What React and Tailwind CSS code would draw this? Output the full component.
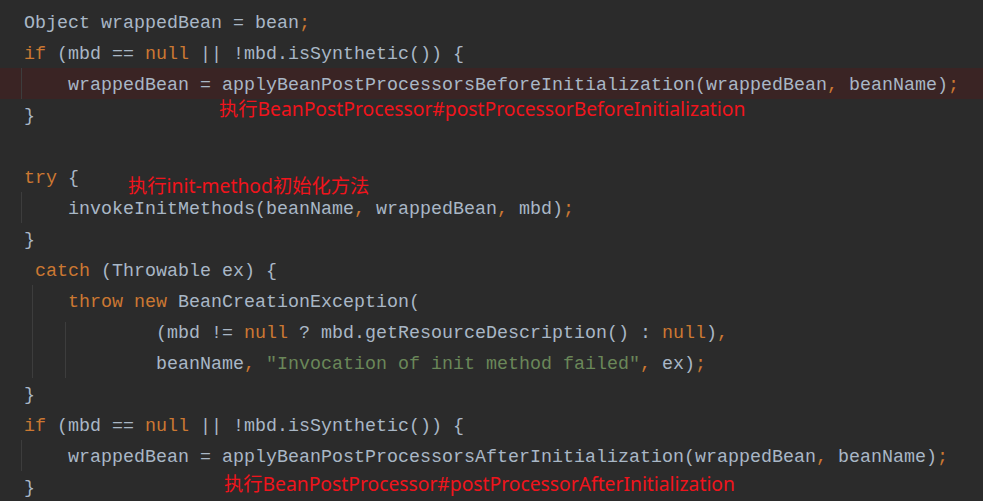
import React from "react";

const K = ({ children }) => <span className="text-[#cc7832]">{children}</span>;
const S = ({ children }) => <span className="text-[#6a8759]">{children}</span>;

const Guide = ({ x, top = 0 }) => (
  <span
    className={`absolute bottom-0 w-px bg-[#3d3d3d] ${x} ${top}`}
  />
);

const Line = ({ children, highlight, guides }) => (
  <div
    className={`relative h-[31px] flex items-center whitespace-pre ${
      highlight ? "bg-[#3a2424]" : ""
    }`}
  >
    {guides}
    <span className="pl-[24px] pt-[5px]">{children}</span>
  </div>
);

const Note = ({ className, children }) => (
  <div
    className={`absolute whitespace-pre text-[19.3px] leading-none text-[#f0141c] ${className}`}
    style={{ fontFamily: '"Noto Sans", "Noto Sans CJK SC", sans-serif' }}
  >
    {children}
  </div>
);

export default function App() {
  return (
    <div
      className="relative w-[983px] h-[501px] overflow-hidden bg-[#2b2b2b] pt-[6px] text-[18.33px] text-[#a9b7c6]"
      style={{ fontFamily: '"Liberation Mono", monospace' }}
    >
      <Line>
        Object wrappedBean = bean<K>;</K>
      </Line>
      <Line>
        <K>if</K> (mbd == <K>null</K> || !mbd.isSynthetic()) {"{"}
      </Line>
      <Line highlight guides={<Guide x="left-[21px]" top="top-0" />}>
        {"    "}wrappedBean = applyBeanPostProcessorsBeforeInitialization(wrappedBean
        <K>,</K> beanName)<K>;</K>
      </Line>
      <Line>{"}"}</Line>
      <Line>{""}</Line>
      <Line>
        <K>try</K> {"{"}
      </Line>
      <Line guides={<Guide x="left-[21px]" top="top-0" />}>
        {"    "}invokeInitMethods(beanName<K>,</K> wrappedBean<K>,</K> mbd)<K>;</K>
      </Line>
      <Line>{"}"}</Line>
      <Line>
        {" "}
        <K>catch</K> (Throwable ex) {"{"}
      </Line>
      <Line guides={<Guide x="left-[32px]" top="top-0" />}>
        {"    "}
        <K>throw new</K> BeanCreationException(
      </Line>
      <Line
        guides={
          <>
            <Guide x="left-[32px]" top="top-0" />
            <Guide x="left-[65px]" top="top-[6px]" />
          </>
        }
      >
        {"            "}(mbd != <K>null</K> ? mbd.getResourceDescription() : <K>null</K>)
        <K>,</K>
      </Line>
      <Line
        guides={
          <>
            <Guide x="left-[32px]" top="top-0" />
            <Guide x="left-[65px]" top="top-0" />
          </>
        }
      >
        {"            "}beanName<K>,</K> <S>"Invocation of init method failed"</S>
        <K>,</K> ex)<K>;</K>
      </Line>
      <Line>{"}"}</Line>
      <Line>
        <K>if</K> (mbd == <K>null</K> || !mbd.isSynthetic()) {"{"}
      </Line>
      <Line guides={<Guide x="left-[21px]" top="top-0" />}>
        {"    "}wrappedBean = applyBeanPostProcessorsAfterInitialization(wrappedBean
        <K>,</K> beanName)<K>;</K>
      </Line>
      <Line>{"}"}</Line>

      <Note className="left-[219px] top-[99px]">
        执行BeanPostProcessor#postProcessorBeforeInitialization
      </Note>
      <Note className="left-[128px] top-[176px]">执行init-method初始化方法</Note>
      <Note className="left-[224px] top-[474px]">
        执行BeanPostProcessor#postProcessorAfterInitialization
      </Note>
    </div>
  );
}
